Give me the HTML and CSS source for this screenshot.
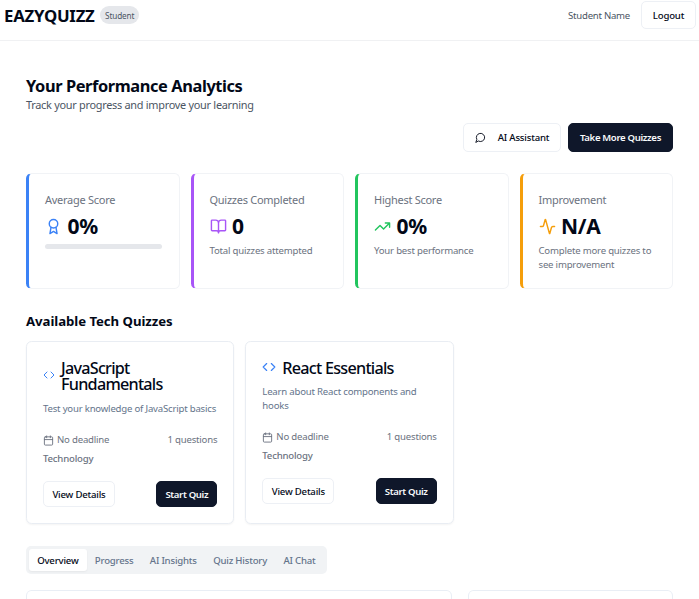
FILE: index.html
```html
<!DOCTYPE html>
<html lang="en">
<head>
<meta charset="utf-8">
<title>EAZYQUIZZ</title>
<link rel="stylesheet" href="styles.css">
</head>
<body>
<svg class="defs" aria-hidden="true">
  <symbol id="chat" viewBox="0 0 24 24"><path d="M7.9 20A9 9 0 1 0 4 16.1L2 22Z"/></symbol>
  <symbol id="award" viewBox="0 0 24 24"><circle cx="12" cy="8" r="6"/><path d="M15.477 12.89 17 22l-5-3-5 3 1.523-9.11"/></symbol>
  <symbol id="book" viewBox="0 0 24 24"><path d="M12 7v14M3 18a1 1 0 0 1-1-1V4a1 1 0 0 1 1-1h5a4 4 0 0 1 4 4 4 4 0 0 1 4-4h5a1 1 0 0 1 1 1v13a1 1 0 0 1-1 1h-6a3 3 0 0 0-3 3 3 3 0 0 0-3-3z"/></symbol>
  <symbol id="trend" viewBox="0 0 24 24"><path d="m22 7-8.500 8.500-5-5L2 17M16 7h6v6"/></symbol>
  <symbol id="pulse" viewBox="0 0 24 24"><path d="M22 12h-2.480a2 2 0 0 0-1.930 1.460l-2.350 8.360a.25.25 0 0 1-.48 0L9.240 2.180a.25.25 0 0 0-.48 0l-2.350 8.360A2 2 0 0 1 4.490 12H2"/></symbol>
  <symbol id="code" viewBox="0 0 24 24"><path d="m16 18 6-6-6-6M8 6l-6 6 6 6"/></symbol>
  <symbol id="calendar" viewBox="0 0 24 24"><path d="M8 2v4M16 2v4M3 10h18"/><rect x="3" y="4" width="18" height="18" rx="2"/></symbol>
</svg>
<header class="topbar">
  <div class="brand"><span class="logo">EAZYQUIZZ</span><span class="badge">Student</span></div>
  <div class="account"><span class="user">Student Name</span><button class="btn logout">Logout</button></div>
</header>
<main>
  <h1>Your Performance Analytics</h1>
  <p class="lead">Track your progress and improve your learning</p>
  <div class="actions">
    <button class="btn assistant"><svg class="icon chat"><use href="#chat"/></svg>AI Assistant</button>
    <button class="btn dark more">Take More Quizzes</button>
  </div>
  <section class="stats">
    <article class="stat blue"><h3>Average Score</h3><div class="value"><svg class="icon"><use href="#award"/></svg><b>0%</b></div><div class="bar"></div></article>
    <article class="stat purple"><h3>Quizzes Completed</h3><div class="value"><svg class="icon"><use href="#book"/></svg><b>0</b></div><p>Total quizzes attempted</p></article>
    <article class="stat green"><h3>Highest Score</h3><div class="value"><svg class="icon"><use href="#trend"/></svg><b>0%</b></div><p>Your best performance</p></article>
    <article class="stat amber"><h3>Improvement</h3><div class="value"><svg class="icon"><use href="#pulse"/></svg><b>N/A</b></div><p>Complete more quizzes to<br>see improvement</p></article>
  </section>
  <h2>Available Tech Quizzes</h2>
  <section class="quizzes">
    <article class="quiz">
      <div class="quiz-title double"><svg class="icon small"><use href="#code"/></svg><h3>JavaScript<br>Fundamentals</h3></div>
      <p class="desc">Test your knowledge of JavaScript basics</p>
      <div class="meta"><span class="due"><svg class="icon"><use href="#calendar"/></svg>No deadline</span><span>1 questions</span></div>
      <div class="topic">Technology</div>
      <div class="foot"><button class="btn sm">View Details</button><button class="btn dark sm start">Start Quiz</button></div>
    </article>
    <article class="quiz">
      <div class="quiz-title"><svg class="icon"><use href="#code"/></svg><h3>React Essentials</h3></div>
      <p class="desc">Learn about React components and<br>hooks</p>
      <div class="meta"><span class="due"><svg class="icon"><use href="#calendar"/></svg>No deadline</span><span>1 questions</span></div>
      <div class="topic">Technology</div>
      <div class="foot"><button class="btn sm">View Details</button><button class="btn dark sm start">Start Quiz</button></div>
    </article>
  </section>
  <nav class="tabs"><a class="active">Overview</a><a>Progress</a><a>AI Insights</a><a>Quiz History</a><a>AI Chat</a></nav>
  <section class="panels"><div class="panel"></div><div class="panel"></div></section>
</main>
</body>
</html>
```
FILE: styles.css
```css
* { box-sizing: border-box; margin: 0; padding: 0; }
body { height: 599px; display: flex; flex-direction: column; background: #fff; color: #020817; font: 9.6px/14px "Noto Sans", "Open Sans", sans-serif; letter-spacing: -.2px; }
.defs { position: absolute; width: 0; height: 0; }
.icon { display: block; width: 17px; height: 17px; flex: none; fill: none; stroke: currentColor; stroke-width: 2; stroke-linecap: round; stroke-linejoin: round; }
.topbar { height: 41px; flex: none; border-bottom: 1px solid #f0f1f3; display: flex; justify-content: space-between; align-items: flex-start; padding: 1px 3px 0 4px; }
.brand { display: flex; align-items: center; height: 28px; gap: 5px; }
.logo { font-size: 16.8px; font-weight: 700; letter-spacing: -.25px; line-height: 22px; padding-top: 2px; }
.badge { height: 18px; line-height: 19px; padding: 0 5px 0 5.5px; border-radius: 9px; background: #e5e7eb; color: #4b5563; font-size: 8.2px; letter-spacing: -.15px; }
.account { display: flex; align-items: center; gap: 11px; }
.user { color: #4b5563; padding-top: 2px; letter-spacing: -.25px; }
.btn { font: 500 9.6px/14px "Noto Sans", sans-serif; letter-spacing: -.2px; height: 28px; padding: 2px 11px 0; border: 1px solid #edf0f5; border-radius: 5px; background: #fff; color: #020817; display: flex; align-items: center; justify-content: center; white-space: nowrap; }
.btn.dark { background: #0f172a; border-color: #0f172a; color: #f8fafc; font-weight: 600; letter-spacing: -.35px; }
.logout { width: 55px; }
main { flex: 1; min-height: 0; display: flex; flex-direction: column; padding: 34px 26px 0; }
h1 { font-size: 16.4px; line-height: 22px; font-weight: 700; letter-spacing: -.4px; white-space: nowrap; }
.lead { font-size: 10.9px; line-height: 16px; letter-spacing: -.27px; color: #4b5563; }
.actions { display: flex; justify-content: flex-end; gap: 7px; margin-top: 10px; }
.actions .btn { height: 29px; padding-top: 0; }
.assistant { width: 98px; gap: 12px; }
.chat { width: 11px; height: 11px; }
.actions .more { width: 105px; }
.stats { display: grid; grid-template-columns: repeat(4, minmax(0, 1fr)); gap: 11px; margin-top: 21px; }
.stat { height: 116px; border: 1px solid #f1f3f6; border-left: 3px solid; border-radius: 5.6px; padding: 18px 0 0 16px; white-space: nowrap; }
.stat h3 { font-size: 11px; line-height: 16px; font-weight: 400; letter-spacing: -.27px; color: #6b7280; }
.value { display: flex; align-items: center; gap: 5.5px; height: 28px; margin-top: 4px; }
.value b { font-size: 21px; line-height: 28px; letter-spacing: -.3px; color: #020817; }
.stat p { color: #6b7280; margin-top: 4px; }
.bar { width: 117px; height: 5px; border-radius: 3px; background: #e5e7eb; margin-top: 4px; }
.blue { border-left-color: #3b82f6; } .blue .icon { color: #3b82f6; }
.purple { border-left-color: #a855f7; } .purple .icon { color: #a855f7; }
.green { border-left-color: #22c55e; } .green .icon { color: #22c55e; }
.amber { border-left-color: #f59e0b; } .amber .icon { color: #f59e0b; }
h2 { font-size: 13.2px; line-height: 20px; font-weight: 700; letter-spacing: -.05px; margin-top: 22px; }
.quizzes { display: grid; grid-template-columns: repeat(3, minmax(0, 1fr)); gap: 11px; margin-top: 10px; }
.quiz { height: 183px; border: 1px solid #e9edf3; border-radius: 5.6px; padding: 18px 16px 0; box-shadow: 0 1px 2px #0000000c; white-space: nowrap; }
.quiz-title { display: flex; align-items: center; gap: 6px; }
.quiz-title.double { padding-bottom: 1px; }
.quiz-title .icon { color: #3b82f6; width: 14px; height: 14px; margin-top: -2px; }
.quiz-title .icon.small { width: 12px; height: 12px; }
.quiz-title h3 { font-size: 16.2px; line-height: 16px; font-weight: 500; letter-spacing: -.75px; }
.desc { color: #64748b; margin-top: 9px; }
.meta { display: flex; justify-content: space-between; margin-top: 17px; color: #6b7280; }
.due { display: flex; align-items: center; gap: 3px; }
.due .icon { width: 11px; height: 11px; }
.topic { color: #6b7280; font-weight: 500; margin-top: 5px; }
.foot { display: flex; justify-content: space-between; margin-top: 15.400px; }
.btn.sm { height: 25.500px; width: 72px; padding: 2px 0 0; }
.btn.start { width: 61px; }
.tabs { display: flex; flex: none; background: #f1f3f5; border-radius: 5px; height: 28px; padding: 3px; margin-top: 22px; width: 301px; color: #64748b; font-weight: 500; letter-spacing: -.2px; }
.tabs a { padding: 5px 8.2px 3px; white-space: nowrap; }
.tabs .active { background: #fff; color: #020817; border-radius: 3px; box-shadow: 0 1px 2px #0000000d; }
.panels { flex: 1; display: grid; grid-template-columns: 426px 1fr; gap: 16px; margin-top: 16px; }
.panel { border: 1px solid #e9eef5; border-bottom: 0; border-radius: 5.6px 5.6px 0 0; }
```
